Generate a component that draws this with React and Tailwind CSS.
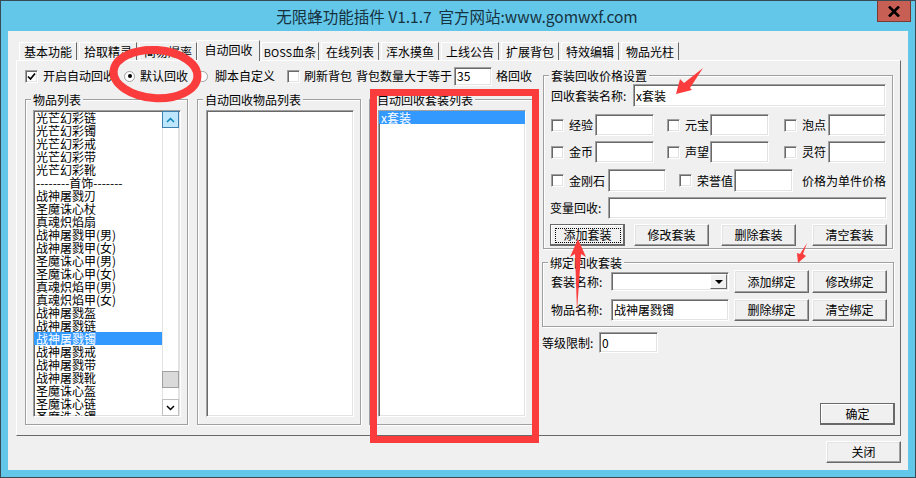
import React from "react";

const tabs = [
  { name: "基本功能", w: "w-[58px] mr-[2px]" },
  { name: "拾取精灵", w: "w-[58px] mr-[2px]" },
  { name: "简易爆率", w: "w-[58px]" },
  { name: "自动回收", w: "w-[63px] mr-[1px]", active: true },
  { name: <><span className="text-[11px]">BOSS</span>血条</>, key: "boss", w: "w-[58px] mr-[2px]" },
  { name: "在线列表", w: "w-[58px] mr-[2px]" },
  { name: "浑水摸鱼", w: "w-[58px] mr-[2px]" },
  { name: "上线公告", w: "w-[58px] mr-[2px]" },
  { name: "扩展背包", w: "w-[58px] mr-[2px]" },
  { name: "特效编辑", w: "w-[58px] mr-[2px]" },
  { name: "物品光柱", w: "w-[58px]" },
];

const items = [
  "光芒幻彩链",
  "光芒幻彩镯",
  "光芒幻彩戒",
  "光芒幻彩带",
  "光芒幻彩靴",
  "--------首饰-------",
  "战神屠戮刃",
  "圣魔诛心杖",
  "真魂炽焰扇",
  "战神屠戮甲(男)",
  "战神屠戮甲(女)",
  "圣魔诛心甲(男)",
  "圣魔诛心甲(女)",
  "真魂炽焰甲(男)",
  "真魂炽焰甲(女)",
  "战神屠戮盔",
  "战神屠戮链",
  "战神屠戮镯",
  "战神屠戮戒",
  "战神屠戮带",
  "战神屠戮靴",
  "圣魔诛心盔",
  "圣魔诛心链",
  "圣魔诛心镯",
];

const sunken =
  "border border-t-[#a0a0a0] border-l-[#a0a0a0] border-r-white border-b-white shadow-[inset_1px_1px_0_#696969,inset_-1px_-1px_0_#e3e3e3] bg-white";

const Check = ({ checked, className = "" }) => (
  <span className={`${sunken} w-[13px] h-[13px] shrink-0 flex items-center justify-center ${className}`}>
    {checked && (
      <svg width="9" height="9" viewBox="0 0 9 9">
        <path d="M1 4.5 L3.5 7 L8 1.5" fill="none" stroke="#000" strokeWidth="1.7" />
      </svg>
    )}
  </span>
);

const Radio = ({ checked, className = "" }) => (
  <span className={`w-[11px] h-[11px] shrink-0 rounded-full border border-[#a0a0a0] bg-white flex items-center justify-center ${className}`}>
    {checked && <span className="w-[4px] h-[4px] rounded-full bg-black" />}
  </span>
);

const Field = ({ className = "", children }) => (
  <div className={`${sunken} shrink-0 flex items-center pl-[2px] ${className}`}>{children}</div>
);

const Btn = ({ className = "", children, isDefault, focused }) => (
  <div
    className={`shrink-0 w-[75px] bg-[#f0f0f0] flex items-center justify-center border ${
      isDefault
        ? "border-[#696969] shadow-[inset_-1px_-1px_0_#696969,inset_1px_1px_0_#fff]"
        : "border-t-white border-l-white border-r-[#696969] border-b-[#696969] shadow-[inset_-1px_-1px_0_#a0a0a0,inset_1px_1px_0_#e3e3e3]"
    } ${className}`}
  >
    {focused ? (
      <span className="w-[66px] h-[15px] flex items-center justify-center border border-dotted border-black">{children}</span>
    ) : (
      children
    )}
  </div>
);

const Group = ({ title, className = "", children }) => (
  <div className={`relative shrink-0 border border-[#a0a0a0] shadow-[1px_1px_0_#fff,inset_1px_1px_0_#fff] ${className}`}>
    <span className="absolute -top-[7px] left-[5px] bg-[#f0f0f0] px-[2px] leading-[14px]">{title}</span>
    {children}
  </div>
);

const ListBox = ({ className = "", children }) => (
  <div className={`${sunken} relative overflow-hidden mt-[10px] w-[148px] h-[307px] leading-[13px] ${className}`}>
    {children}
  </div>
);

const Scrollbar = () => (
  <div className="absolute right-px top-0 bottom-0 w-[17px] bg-white flex flex-col border-x border-[#e3e3e3]">
    <div className="h-[17px] bg-[#bee6fd] border border-[#3c7fb1] flex items-center justify-center -mx-px">
      <svg width="9" height="6" viewBox="0 0 9 6">
        <path d="M1 5 L4.5 1.5 L8 5" fill="none" stroke="#0a84b8" strokeWidth="1.5" />
      </svg>
    </div>
    <div className="h-[243px]" />
    <div className="h-[17px] bg-[#dadada] border border-[#a0a0a0] -mx-px" />
    <div className="h-[11px]" />
    <div className="h-[17px] bg-white border border-[#c0c0c0] flex items-center justify-center -mx-px">
      <svg width="9" height="6" viewBox="0 0 9 6">
        <path d="M1 1 L4.5 4.5 L8 1" fill="none" stroke="#000" strokeWidth="1.5" />
      </svg>
    </div>
  </div>
);

const Annotations = () => (
  <svg className="absolute -top-px -left-px pointer-events-none" width="916" height="478" viewBox="0 0 916 478">
    <ellipse cx="155.5" cy="74" rx="42" ry="24" fill="none" stroke="#fb3c3c" strokeWidth="8" transform="rotate(4 155 74)" />
    <rect x="373.5" y="92.5" width="162" height="347" fill="none" stroke="#fb3c3c" strokeWidth="7" />
    <polygon points="703,68 690,88 692,90 676,94 680,79 684,83" fill="#fb3c3c" />
    <polygon points="578,239 586,257 581,254 577,311 575,254 570,257" fill="#fb3c3c" />
    <polygon points="807,243 803,254 806,256 798,263 797,253 800,254" fill="#fb3c3c" />
  </svg>
);

export default function App() {
  return (
    <div
      className="relative w-[916px] h-[478px] overflow-hidden bg-[#63c7ea] border border-[#3a4a52] text-[12px] leading-[14px] text-black"
      style={{ fontFamily: '"Noto Sans CJK SC", "Liberation Sans", sans-serif' }}
    >
      <div className="h-[30px] flex items-center justify-center text-[15.5px] text-[#17323f] whitespace-pre pr-[2px]">
        无限蜂功能插件 V1.1.7  官方网站:www.gomwxf.com
      </div>
      <div className="absolute top-0 right-[4px] w-[34px] h-[21px] bg-[#c75f55] border border-[#7a3a34] border-t-0 flex items-center justify-center">
        <svg width="12" height="11" viewBox="0 0 12 11">
          <path d="M1 0.5 L11 10.5 M11 0.5 L1 10.5" stroke="#000" strokeWidth="2.6" />
        </svg>
      </div>

      <div className="ml-[7px] w-[900px] h-[439px] bg-[#f0f0f0]">
        <div className="h-[29px] pl-[11px] flex items-end">
          {tabs.map((t) => (
            <div
              key={t.key || t.name}
              className={`${t.w} relative flex items-center justify-center shrink-0 border-t border-l border-t-white border-l-white border-r border-r-[#696969] ${
                t.active ? "h-[21px] -mb-px z-10 bg-[#f0f0f0] pb-[3px]" : "h-[18px]"
              }`}
            >
              {t.name}
            </div>
          ))}
        </div>

        <div className="ml-[8px] w-[885px] h-[376px] flex border border-t-white border-l-white border-r-[#696969] border-b-[#696969]">
          <div className="ml-[8px] w-[507px] shrink-0">
            <div className="mt-[5px] h-[20px] flex items-center whitespace-nowrap">
              <Check checked />
              <span className="ml-[5px] w-[72px]">开启自动回收</span>
              <Radio checked className="ml-[9px]" />
              <span className="ml-[5px]">默认回收</span>
              <Radio className="ml-[9px]" />
              <span className="ml-[7px]">脚本自定义</span>
              <Check className="ml-[12px]" />
              <span className="ml-[4px]">刷新背包</span>
              <span className="ml-[4px]">背包数量大于等于</span>
              <Field className="ml-[2px] w-[38px] h-[19px]">35</Field>
              <span className="ml-[4px]">格回收</span>
            </div>

            <div className="mt-[13px] flex h-[326px]">
              <Group title="物品列表" className="w-[163px] h-[326px] pl-[7px]">
                <ListBox>
                  {items.map((it, i) => (
                    <div
                      key={it + i}
                      className={`h-[13px] pl-[2px] whitespace-nowrap ${i === 17 ? "bg-[#3399ff] text-white w-[129px]" : ""}`}
                    >
                      {it}
                    </div>
                  ))}
                  <Scrollbar />
                </ListBox>
              </Group>
              <Group title="自动回收物品列表" className="ml-[9px] w-[164px] h-[326px] pl-[8px]">
                <ListBox />
              </Group>
              <Group title="自动回收套装列表" className="ml-[8px] w-[164px] h-[326px] pl-[8px]">
                <ListBox>
                  <div className="h-[13px] pl-[2px] bg-[#3399ff] text-white">x套装</div>
                </ListBox>
              </Group>
            </div>
          </div>

          <div className="ml-[10px] w-[353px] shrink-0">
            <Group title="套装回收价格设置" className="mt-[14px] ml-px w-[350px] h-[174px]">
              <div className="mt-[8px] pl-[7px] flex items-center">
                <span className="w-[82px]">回收套装名称:</span>
                <Field className="w-[253px] h-[23px]">x套装</Field>
              </div>
              <div className="mt-[7px] pl-[7px] flex items-center">
                <Check />
                <span className="ml-[5px]">经验</span>
                <Field className="ml-[2px] w-[59px] h-[22px]" />
                <Check className="ml-[13px]" />
                <span className="ml-[5px]">元宝</span>
                <Field className="ml-[1px] w-[59px] h-[22px]" />
                <Check className="ml-[15px]" />
                <span className="ml-[5px]">泡点</span>
                <Field className="ml-[2px] w-[58px] h-[22px]" />
              </div>
              <div className="mt-[5px] pl-[7px] flex items-center">
                <Check />
                <span className="ml-[5px]">金币</span>
                <Field className="ml-[2px] w-[59px] h-[22px]" />
                <Check className="ml-[13px]" />
                <span className="ml-[5px]">声望</span>
                <Field className="ml-[1px] w-[59px] h-[22px]" />
                <Check className="ml-[15px]" />
                <span className="ml-[5px]">灵符</span>
                <Field className="ml-[2px] w-[58px] h-[22px]" />
              </div>
              <div className="mt-[6px] pl-[7px] flex items-center">
                <Check />
                <span className="ml-[5px]">金刚石</span>
                <Field className="ml-[3px] w-[58px] h-[23px]" />
                <Check className="ml-[13px]" />
                <span className="ml-[5px]">荣誉值</span>
                <Field className="ml-[1px] w-[59px] h-[23px]" />
                <span className="ml-[9px]">价格为单件价格</span>
              </div>
              <div className="mt-[5px] pl-[6px] flex items-center">
                <span className="w-[54px]">变量回收:</span>
                <Field className="ml-[4px] w-[279px] h-[22px]" />
              </div>
              <div className="mt-[5px] pl-[6px] flex">
                <Btn isDefault focused className="h-[22px]">添加套装</Btn>
                <Btn className="ml-[9px] h-[22px]">修改套装</Btn>
                <Btn className="ml-[12px] h-[22px]">删除套装</Btn>
                <Btn className="ml-[16px] h-[22px]">清空套装</Btn>
              </div>
            </Group>

            <Group title="绑定回收套装" className="mt-[13px] w-[352px] h-[65px]">
              <div className="mt-[7px] pl-[8px] flex items-center">
                <span className="w-[60px]">套装名称:</span>
                <div className={`${sunken} w-[118px] h-[19px] relative shrink-0`}>
                  <div className="absolute right-px top-px bottom-px w-[17px] bg-[#f0f0f0] border border-t-white border-l-white border-r-[#696969] border-b-[#696969] flex items-center justify-center">
                    <span className="w-0 h-0 border-x-[4px] border-x-transparent border-t-[4px] border-t-black" />
                  </div>
                </div>
                <Btn className="ml-[5px] h-[23px]">添加绑定</Btn>
                <Btn className="ml-[3px] h-[23px]">修改绑定</Btn>
              </div>
              <div className="mt-[6px] pl-[8px] flex items-center">
                <span className="w-[60px]">物品名称:</span>
                <Field className="w-[118px] h-[22px]">战神屠戮镯</Field>
                <Btn className="ml-[5px] h-[22px]">删除绑定</Btn>
                <Btn className="ml-[3px] h-[22px]">清空绑定</Btn>
              </div>
            </Group>

            <div className="mt-[5px] flex items-center">
              <span className="w-[57px]">等级限制:</span>
              <Field className="w-[59px] h-[21px]">0</Field>
            </div>
            <div className="mt-[50px] flex justify-end">
              <Btn isDefault className="h-[22px]">确定</Btn>
            </div>
          </div>
        </div>

        <Btn className="mt-[5px] ml-[818px] h-[22px]">关闭</Btn>
      </div>

      <Annotations />
    </div>
  );
}
